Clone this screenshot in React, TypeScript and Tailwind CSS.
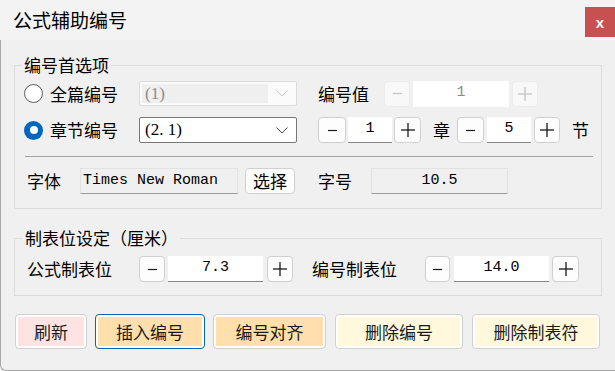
import React from 'react';

const cjk = "font-['Noto_Sans_CJK_SC',sans-serif]";

const Minus = ({ color }: { color: string }) => (
  <svg width="9" height="9" viewBox="0 0 9 9">
    <line x1="0" y1="4.5" x2="9" y2="4.5" stroke={color} strokeWidth="1.2" />
  </svg>
);

const Plus = ({ color }: { color: string }) => (
  <svg width="14" height="14" viewBox="0 0 14 14">
    <line x1="0" y1="7" x2="14" y2="7" stroke={color} strokeWidth="1.3" />
    <line x1="7" y1="0" x2="7" y2="14" stroke={color} strokeWidth="1.3" />
  </svg>
);

const SpinBtn = ({ plus, disabled, className }: { plus?: boolean; disabled?: boolean; className: string }) => (
  <div
    className={`flex h-full shrink-0 items-center justify-center rounded-[4px] border ${
      disabled ? 'border-[#ececec] bg-[#f8f8f8]' : 'border-[#d0d0d0] bg-[#fdfdfd]'
    } ${className}`}
  >
    {plus ? <Plus color={disabled ? '#c4c4c4' : '#1a1a1a'} /> : <Minus color={disabled ? '#c4c4c4' : '#1a1a1a'} />}
  </div>
);

const NumBox = ({ value, className, disabled }: { value: string; className: string; disabled?: boolean }) => (
  <div
    className={`flex h-full shrink-0 items-center justify-center bg-white font-['Liberation_Mono',monospace] text-[15px] ${
      disabled ? 'text-[#8a8a8a]' : 'border-b border-[#858585] text-black'
    } ${className}`}
  >
    {value}
  </div>
);

const Chevron = ({ color }: { color: string }) => (
  <svg width="12" height="7" viewBox="0 0 12 7">
    <polyline points="0.5,0.5 6,6 11.5,0.5" fill="none" stroke={color} strokeWidth="1" />
  </svg>
);

const Radio = ({ checked }: { checked?: boolean }) =>
  checked ? (
    <div className="flex h-[19px] w-[19px] shrink-0 items-center justify-center rounded-full bg-[#0067c0]">
      <div className="h-[8px] w-[8px] rounded-full bg-white" />
    </div>
  ) : (
    <div className="h-[19px] w-[19px] shrink-0 rounded-full border border-[#5c5c5c] bg-white" />
  );

const ActionBtn = ({ label, className }: { label: string; className: string }) => (
  <div
    className={`flex h-[35px] items-center justify-center rounded-[4px] border shadow-[inset_0_0_0_2px_#ffffff] text-[17px] text-[#1a1a1a] ${className}`}
  >
    {label}
  </div>
);

export default function App() {
  return (
    <div className={`h-[371px] w-[615px] overflow-hidden bg-[#f0f0f0] text-black ${cjk}`}>
      {/* title bar */}
      <div className="flex h-[40px] items-start bg-[#f3f3f3]">
        <div className="ml-[13px] mt-[7px] text-[19px] leading-[25px]">公式辅助编号</div>
        <div className="ml-auto mt-[7px] flex h-[30px] w-[30px] items-center justify-center bg-[#c75050] font-['Liberation_Sans',sans-serif] text-[15px] font-bold leading-none text-white">
          x
        </div>
      </div>

      <div className="flex h-[331px] flex-col rounded-bl-[6px] border-b border-l border-[#a8a8a8] pl-[13px] pr-[13px]">
        {/* 编号首选项 */}
        <fieldset className="mt-[15px] border border-[#dcdcdc] pb-[14px] pt-[6px]">
          <legend className="ml-[7px] px-[2px] text-[17px] leading-[20px]">编号首选项</legend>

          <div className="flex h-[25px] items-center text-[17px]">
            <div className="ml-[9px] flex w-[115px] items-center gap-[7px]">
              <Radio />
              <span>全篇编号</span>
            </div>
            <div className="flex h-full w-[158px] items-center rounded-[2px] border border-[#dadada] bg-[#fbfbfb] pl-[2px] pr-[8px]">
              <div className="flex h-[19px] w-[126px] items-center bg-[#efefef] pl-[3px] font-['Liberation_Serif',serif] text-[17px] text-[#8c8c8c]">
                (1)
              </div>
              <div className="ml-auto">
                <Chevron color="#c8c8c8" />
              </div>
            </div>
            <span className="ml-[21px] w-[66px]">编号值</span>
            <div className="flex h-[26px] items-center gap-[3px]">
              <SpinBtn disabled className="w-[26px]" />
              <NumBox disabled value="1" className="w-[96px]" />
              <SpinBtn disabled plus className="w-[26px]" />
            </div>
          </div>

          <div className="mt-[11px] flex h-[26px] items-center text-[17px]">
            <div className="ml-[9px] flex w-[115px] items-center gap-[7px]">
              <Radio checked />
              <span>章节编号</span>
            </div>
            <div className="flex h-full w-[158px] items-center rounded-[2px] border border-[#767676] bg-white pl-[5px] pr-[8px]">
              <span className="font-['Liberation_Serif',serif] text-[17px]">(2. 1)</span>
              <div className="ml-auto">
                <Chevron color="#4a4a4a" />
              </div>
            </div>
            <div className="ml-[21px] flex h-full items-center">
              <SpinBtn className="w-[28px]" />
              <NumBox value="1" className="ml-[2px] w-[44px]" />
              <SpinBtn plus className="ml-[2px] w-[27px]" />
              <span className="ml-[12px]">章</span>
              <SpinBtn className="ml-[7px] w-[27px]" />
              <NumBox value="5" className="ml-[3px] w-[44px]" />
              <SpinBtn plus className="ml-[3px] w-[26px]" />
              <span className="ml-[12px]">节</span>
            </div>
          </div>

          <div className="ml-[10px] mr-[8px] mt-[13px] h-px bg-[#a3a3a3]" />

          <div className="mt-[11px] flex h-[26px] items-center text-[17px]">
            <span className="ml-[12px] w-[53px]">字体</span>
            <div className="flex h-full w-[158px] items-center border border-[#e2e2e2] border-b-[#9c9c9c] bg-[#f0f0f0] pl-[2px] font-['Liberation_Mono',monospace] text-[15px]">
              Times New Roman
            </div>
            <div className="ml-[7px] flex h-full w-[50px] items-center justify-center rounded-[4px] border border-[#d0d0d0] bg-[#fdfdfd]">
              选择
            </div>
            <span className="ml-[23px] w-[53px]">字号</span>
            <div className="flex h-full w-[137px] items-center justify-center border border-[#e2e2e2] border-b-[#9c9c9c] bg-[#f0f0f0] font-['Liberation_Mono',monospace] text-[15px]">
              10.5
            </div>
          </div>
        </fieldset>

        {/* 制表位设定 */}
        <fieldset className="mt-[19px] border border-[#dcdcdc] pb-[13px] pt-[8px]">
          <legend className="ml-[8px] px-[2px] text-[17px] leading-[20px]">制表位设定（厘米）</legend>
          <div className="flex h-[26px] items-center text-[17px]">
            <span className="ml-[12px] w-[112px]">公式制表位</span>
            <SpinBtn className="w-[26px]" />
            <NumBox value="7.3" className="ml-[3px] w-[95px]" />
            <SpinBtn plus className="ml-[4px] w-[26px]" />
            <span className="ml-[19px] w-[113px]">编号制表位</span>
            <SpinBtn className="w-[25px]" />
            <NumBox value="14.0" className="ml-[4px] w-[95px]" />
            <SpinBtn plus className="ml-[3px] w-[27px]" />
          </div>
        </fieldset>

        {/* buttons */}
        <div className="mt-[18px] flex items-center">
          <ActionBtn label="刷新" className="ml-px w-[72px] border-[#d0d0d0] bg-[#ffe3e3]" />
          <ActionBtn label="插入编号" className="ml-[8px] w-[110px] border-[#0067c0] bg-[#ffdfab]" />
          <ActionBtn label="编号对齐" className="ml-[8px] w-[113px] border-[#d0d0d0] bg-[#ffdfab]" />
          <ActionBtn label="删除编号" className="ml-[9px] w-[128px] border-[#d0d0d0] bg-[#fff8dc]" />
          <ActionBtn label="删除制表符" className="ml-[9px] w-[128px] border-[#d0d0d0] bg-[#fff8dc]" />
        </div>
      </div>
    </div>
  );
}
